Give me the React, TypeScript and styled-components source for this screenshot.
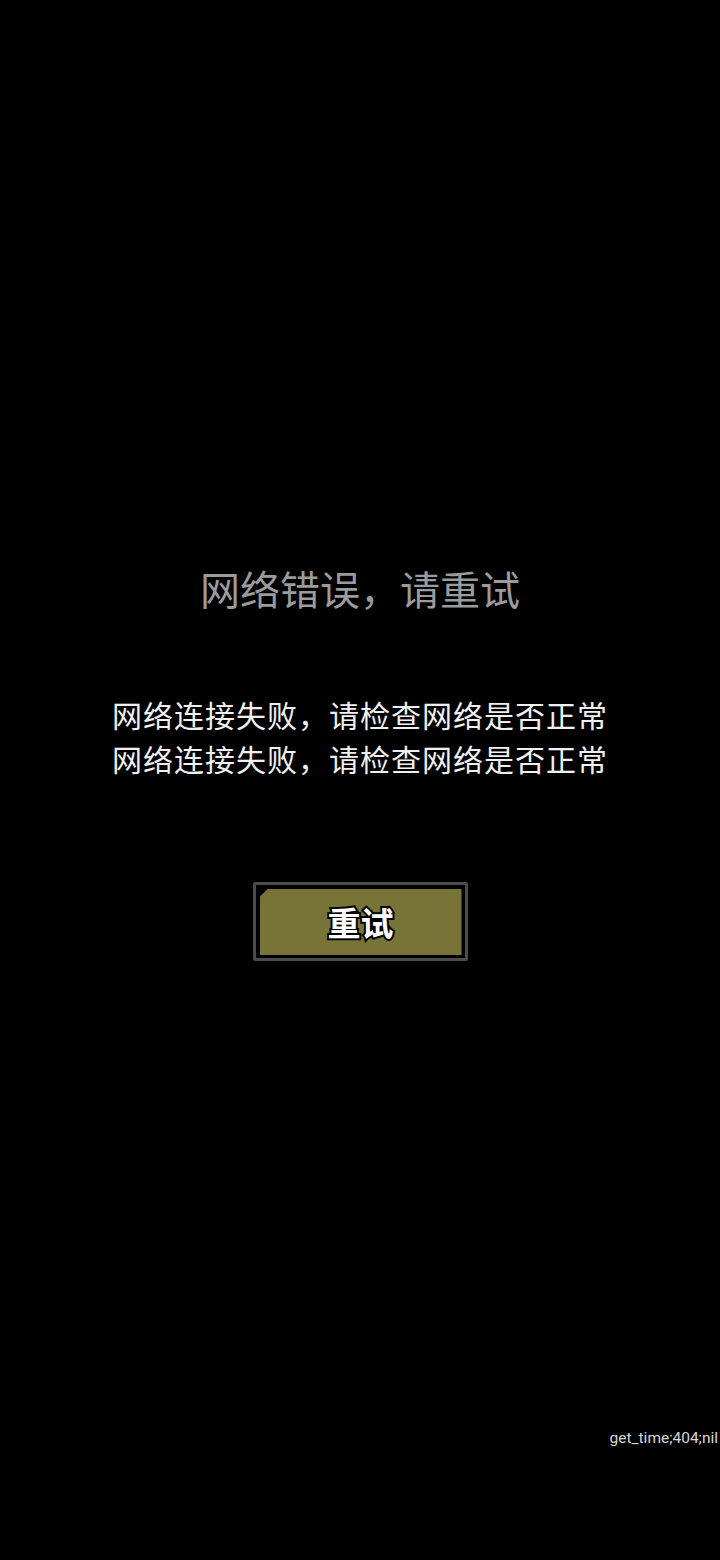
import React from 'react';
import styled, { createGlobalStyle } from 'styled-components';

const GlobalStyle = createGlobalStyle`
  html, body {
    margin: 0;
    padding: 0;
    background: #000;
  }
`;

const Page = styled.div`
  min-height: 1560px;
  box-sizing: border-box;
  display: flex;
  flex-direction: column;
  align-items: center;
  background: #000;
  padding-top: 564px;
  padding-bottom: 112px;
  font-family: "Noto Sans CJK SC", "Noto Sans", sans-serif;
`;

const Title = styled.h1`
  margin: 0;
  font-size: 40px;
  line-height: 48px;
  font-weight: 400;
  color: #9b9b9b;
`;

const Message = styled.div`
  margin-top: 80px;
  display: flex;
  flex-direction: column;
  align-items: center;
  font-size: 30px;
  letter-spacing: 1px;
  line-height: 44px;
  color: #f0f0f0;
`;

const RetryButton = styled.button`
  margin-top: 102px;
  width: 215px;
  height: 79px;
  box-sizing: border-box;
  border: 3px solid #4b4b4b;
  border-radius: 2px;
  background: #000;
  padding: 4px 3px 3px 4px;
  display: flex;
  cursor: pointer;
`;

const ButtonFace = styled.span`
  flex: 1;
  display: flex;
  align-items: center;
  justify-content: center;
  background: #787437;
  clip-path: polygon(8px 0, 100% 0, 100% 100%, 0 100%, 0 8px);
  font-family: "Noto Sans CJK SC", sans-serif;
  font-size: 33px;
  font-weight: 700;
  color: #fff;
  -webkit-text-stroke: 4px #000;
  paint-order: stroke fill;
`;

const Footer = styled.div`
  margin-top: auto;
  align-self: stretch;
  text-align: right;
  padding-right: 2px;
  font-family: Roboto, "Liberation Sans", sans-serif;
  font-size: 15.5px;
  line-height: 20px;
  color: #d6d6d6;
`;

const App: React.FC = () => {
  const message = '网络连接失败，请检查网络是否正常';

  return (
    <>
      <GlobalStyle />
      <Page>
        <Title>网络错误，请重试</Title>
        <Message>
          <span>{message}</span>
          <span>{message}</span>
        </Message>
        <RetryButton type="button">
          <ButtonFace>重试</ButtonFace>
        </RetryButton>
        <Footer>get_time;404;nil</Footer>
      </Page>
    </>
  );
};

export default App;
